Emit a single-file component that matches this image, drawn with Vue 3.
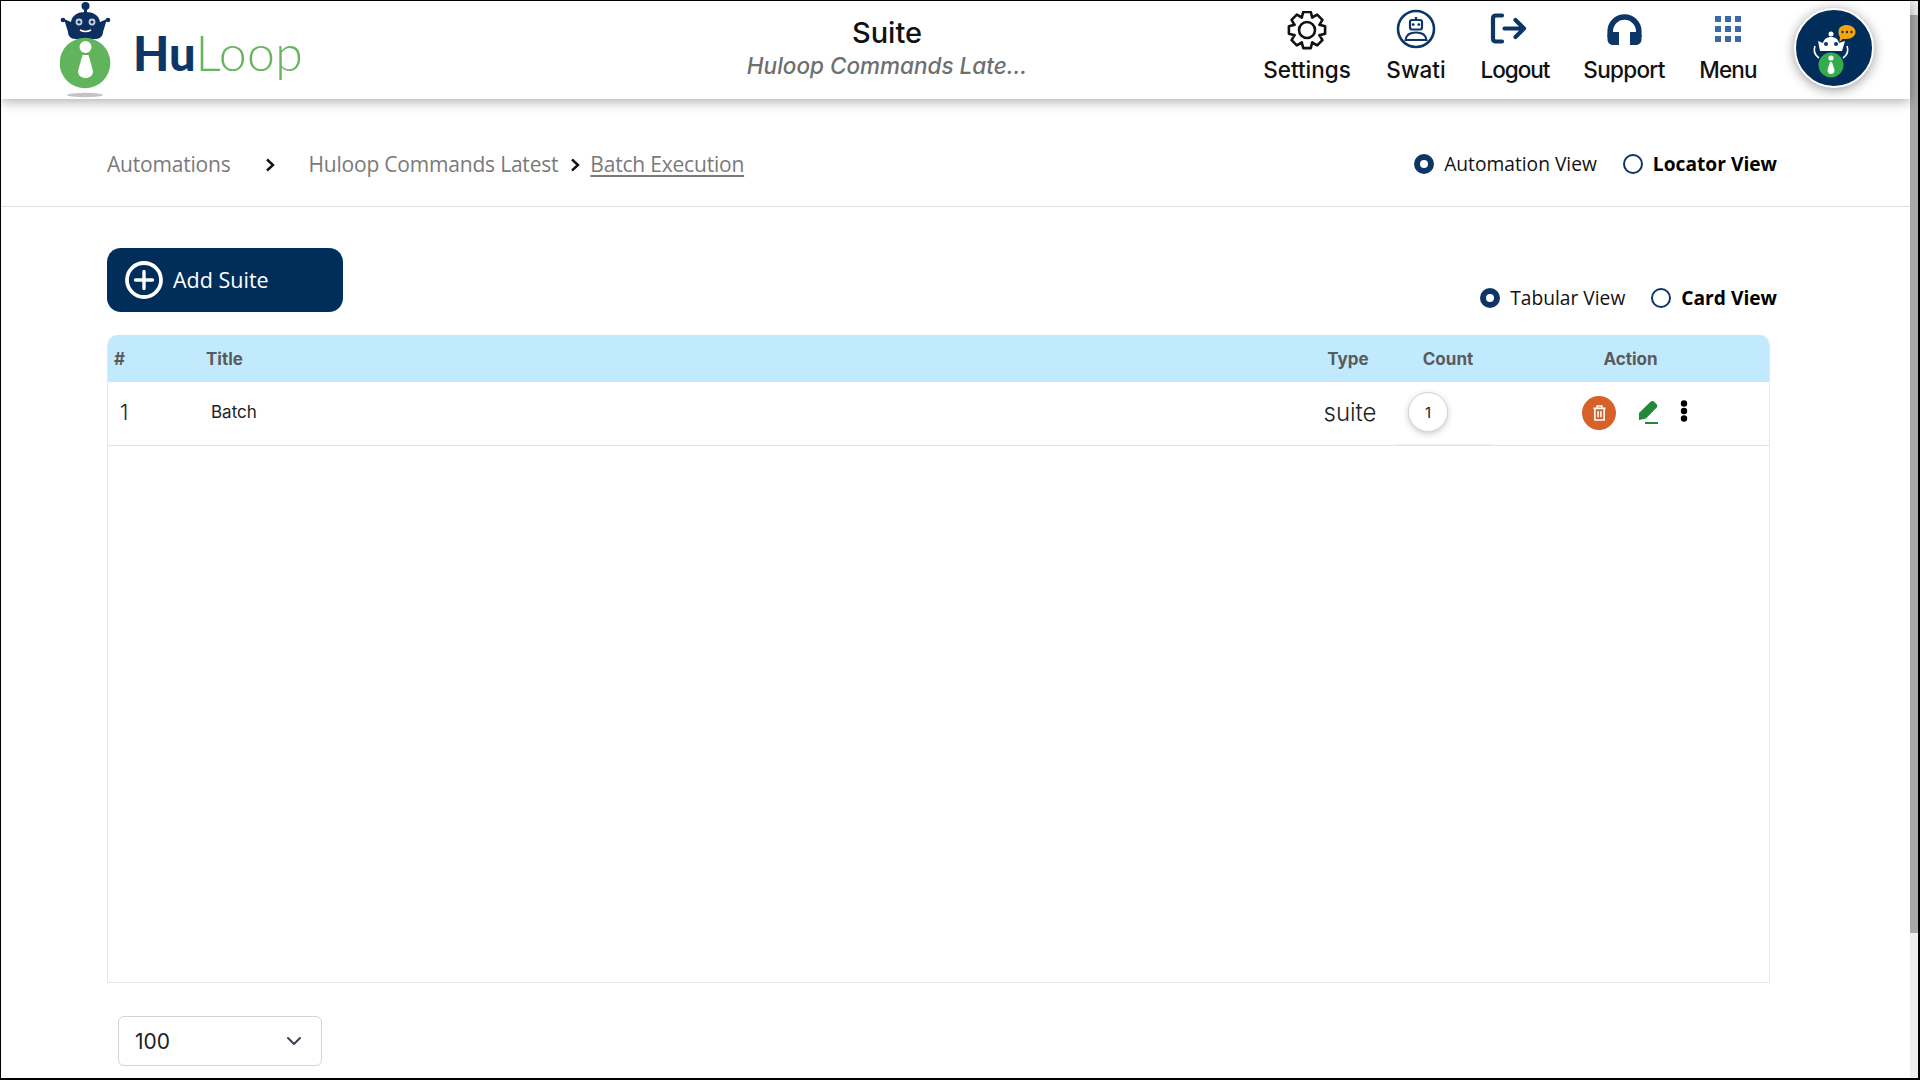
<template>
  <div class="screen">
    <div class="page">
      <header class="top-bar">
        <div class="brand">
          <svg class="brand-mark" viewBox="0 0 52 98" width="52" height="98">
            <ellipse cx="25" cy="94" rx="18" ry="2.2" fill="#c4c4c4" />
            <circle cx="25.5" cy="5" r="4" fill="#0d2f5f" />
            <rect x="24" y="7" width="3" height="6" fill="#0d2f5f" />
            <path d="M4 18 L11 21 C12 14 18 11 25.5 11 C33 11 39 14 40 21 L47 18 L43 31 C43 35 40 38 36 38 L15 38 C11 38 8 35 8 31 Z" fill="#0d2f5f" />
            <circle cx="3" cy="19" r="2.3" fill="#0d2f5f" />
            <circle cx="48" cy="19" r="2.3" fill="#0d2f5f" />
            <circle cx="19" cy="21" r="3.4" fill="#c9d2de" />
            <circle cx="32" cy="21" r="3.4" fill="#c9d2de" />
            <circle cx="19" cy="21" r="1.6" fill="#0d2f5f" />
            <circle cx="32" cy="21" r="1.6" fill="#0d2f5f" />
            <path d="M20 29 Q25.5 32 31 29" stroke="#fff" stroke-width="1.6" fill="none" />
            <circle cx="25" cy="62" r="25.3" fill="#62b45c" />
            <circle cx="25.5" cy="46" r="6" fill="#fff" />
            <path d="M22.5 54 L28.5 54 L33 70 C33 75 29 77 25.5 77 C22 77 18 75 18 70 Z" fill="#fff" />
          </svg>
          <div class="brand-name"><b>Hu</b><span>Loop</span></div>
        </div>

        <div class="page-title">
          <div class="page-title-main">Suite</div>
          <div class="page-title-sub">Huloop Commands Late...</div>
        </div>

        <nav class="top-nav">
          <div class="nav-item settings">
            <svg viewBox="0 0 40 40" width="40" height="40" fill="none" stroke="#111" stroke-width="2.6" stroke-linejoin="round">
              <path :d="gearPath" />
              <circle cx="20" cy="19" r="8" />
            </svg>
            <span>Settings</span>
          </div>
          <div class="nav-item swati">
            <svg viewBox="0 0 40 40" width="40" height="40" fill="none" stroke="#0d3666" stroke-width="2.6">
              <circle cx="20" cy="20" r="18" />
              <rect x="14" y="11" width="12" height="9.5" rx="2" stroke-width="2.2" fill="#fff" />
              <path d="M20 8 V11" stroke-width="2.4" />
              <circle cx="17.2" cy="15.6" r="1.4" fill="#0d3666" stroke="none" />
              <circle cx="22.8" cy="15.6" r="1.4" fill="#0d3666" stroke="none" />
              <path d="M9.5 31 C10 26 14 23.5 20 23.5 C26 23.5 30 26 30.5 31 Z" stroke-width="2" />
            </svg>
            <span>Swati</span>
          </div>
          <div class="nav-item logout">
            <svg viewBox="0 0 37 31" width="37" height="31" fill="none" stroke="#0d3666" stroke-width="4.2" stroke-linecap="round" stroke-linejoin="round">
              <path d="M12 2.5 H6 C3.8 2.5 3 3.5 3 5.5 V25.5 C3 27.5 3.8 28.5 6 28.5 H12" />
              <path d="M14.5 15.5 H34 M25.5 7 L34 15.5 L25.5 24" />
            </svg>
            <span>Logout</span>
          </div>
          <div class="nav-item support">
            <svg viewBox="0 0 35 31" width="35" height="31" fill="#0d3666">
              <path d="M3.2 23 V17.3 A14.3 14.3 0 0 1 31.8 17.3 V23" fill="none" stroke="#0d3666" stroke-width="5.6" />
              <path d="M.5 22 C.5 19.5 2.5 18 5 18 H12 V31 H6 C3 31 .5 28.5 .5 25.5 Z M34.5 22 C34.5 19.5 32.5 18 30 18 H23 V31 H29 C32 31 34.5 28.5 34.5 25.5 Z" />
            </svg>
            <span>Support</span>
          </div>
          <div class="nav-item menu">
            <svg viewBox="0 0 26 26" width="26" height="26" fill="#3a6aa3">
              <rect v-for="cell in menuCells" :key="cell.id" :x="cell.x" :y="cell.y" width="6" height="6" />
            </svg>
            <span>Menu</span>
          </div>
        </nav>

        <div class="avatar">
          <svg viewBox="0 0 76 76" width="76" height="76">
            <path d="M42.5 22 C42.5 17 46.5 15 50.5 15 C55.5 15 59.5 18 59.5 22 C59.5 26 55.5 29 50.5 29 L46.5 29 L43.5 32 L44 27 C43 26 42.5 24 42.5 22 Z" fill="#f2a516" />
            <circle cx="46.5" cy="22" r="1.2" fill="#3a2a05" />
            <circle cx="51" cy="22" r="1.2" fill="#3a2a05" />
            <circle cx="55.5" cy="22" r="1.2" fill="#3a2a05" />
            <circle cx="35" cy="24" r="2.5" fill="#fff" />
            <path d="M22 31 L27 33 C28 29 31 27 35 27 C39 27 42 29 43 33 L49 31 L46 41 L24 41 Z" fill="#fff" />
            <circle cx="30" cy="34" r="2" fill="#0d3666" />
            <circle cx="40" cy="34" r="2" fill="#0d3666" />
            <path d="M19 36 C17 41 19 45 23 48 M51 36 C53 41 51 45 47 48" stroke="#fff" stroke-width="1.6" fill="none" />
            <circle cx="35" cy="55" r="12.5" fill="#34ac4b" />
            <circle cx="35" cy="48" r="2.6" fill="#fff" />
            <path d="M34 52 H36 L38.5 60 C38.5 63 36.5 64 35 64 C33.5 64 31.5 63 31.5 60 Z" fill="#fff" />
          </svg>
        </div>
      </header>

      <div class="crumb-bar">
        <div class="crumbs">
          <span class="crumb first">Automations</span>
          <svg class="crumb-sep wide" viewBox="0 0 10 14" width="10" height="14"><path d="M2 1.5 L8 7 L2 12.5" /></svg>
          <span class="crumb">Huloop Commands Latest</span>
          <svg class="crumb-sep" viewBox="0 0 10 14" width="10" height="14"><path d="M2 1.5 L8 7 L2 12.5" /></svg>
          <span class="crumb current">Batch Execution</span>
        </div>
        <div class="radios">
          <label class="radio on"><i></i>Automation View</label>
          <label class="radio"><i></i><b>Locator View</b></label>
        </div>
      </div>

      <main class="content">
        <div class="toolbar">
          <button class="add-btn">
            <svg viewBox="0 0 38 38" width="38" height="38" fill="none" stroke="#fff">
              <circle cx="19" cy="19" r="17" stroke-width="3.8" />
              <path d="M19 10.5 V27.5 M10.5 19 H27.5" stroke-width="3.4" stroke-linecap="round" />
            </svg>
            <span>Add Suite</span>
          </button>
          <div class="radios">
            <label class="radio on"><i></i>Tabular View</label>
            <label class="radio"><i></i><b>Card View</b></label>
          </div>
        </div>

        <div class="table-wrap">
          <table>
            <thead>
              <tr>
                <th class="col-num">#</th>
                <th class="col-title">Title</th>
                <th class="col-type">Type</th>
                <th class="col-count">Count</th>
                <th class="col-action">Action</th>
              </tr>
            </thead>
            <tbody>
              <tr v-for="row in rows" :key="row.id">
                <td class="cell-num">{{ row.id }}</td>
                <td class="cell-title">{{ row.title }}</td>
                <td class="cell-type">{{ row.type }}</td>
                <td class="cell-count"><span class="count-badge">{{ row.count }}</span></td>
                <td class="cell-action">
                  <div class="actions">
                    <button class="trash-btn">
                      <svg viewBox="0 0 14 17" width="13" height="16" fill="none" stroke="#fff" stroke-width="1.7">
                        <path d="M.5 3.5 H13.5 M4.5 3.5 V1 H9.5 V3.5 M2 3.5 V16 H12 V3.5 M5.5 6.5 V13 M8.5 6.5 V13" />
                      </svg>
                    </button>
                    <svg class="pencil" viewBox="0 0 20 24" width="20" height="24">
                      <path d="M12.5 1.8 C13.5 .8 15 .8 16 1.6 L18.7 4.3 C19.5 5.2 19.5 6.6 18.7 7.4 L8 18.5 L1 20 L1 13 Z" fill="#22893a" />
                      <rect x="7" y="22" width="13" height="2" fill="#22893a" />
                    </svg>
                    <svg class="dots" viewBox="0 0 8 22" width="8" height="22" fill="#000">
                      <circle cx="4" cy="3.5" r="3.2" />
                      <circle cx="4" cy="11" r="3.2" />
                      <circle cx="4" cy="18.5" r="3.2" />
                    </svg>
                  </div>
                </td>
              </tr>
            </tbody>
          </table>
        </div>

        <div class="page-size">
          <span>100</span>
          <svg viewBox="0 0 16 10" width="16" height="10" fill="none" stroke="#3b4250" stroke-width="2" stroke-linecap="round" stroke-linejoin="round">
            <path d="M2 2 L8 8 L14 2" />
          </svg>
        </div>
      </main>
    </div>

    <div class="scrollbar"><div class="scroll-thumb"></div></div>
  </div>
</template>

<script setup>
const rows = [{ id: 1, title: 'Batch', type: 'suite', count: 1 }];

// 3x3 grid for the Menu icon
const menuCells = [];
for (let r = 0; r < 3; r++) {
  for (let c = 0; c < 3; c++) {
    menuCells.push({ id: `${r}-${c}`, x: c * 10, y: r * 10 });
  }
}

// 8 tooth outline for the Settings icon
const gearPath = (() => {
  const pts = [];
  for (let i = 0; i < 8; i++) {
    const a = (i * Math.PI) / 4 - Math.PI / 2;
    const step = [[-0.4, 13.5], [-0.2, 18.5], [0.2, 18.5], [0.4, 13.5]];
    for (const [da, radius] of step) {
      pts.push(`${(20 + radius * Math.cos(a + da)).toFixed(1)} ${(19 + radius * Math.sin(a + da)).toFixed(1)}`);
    }
  }
  return `M${pts.join(' L')} Z`;
})();
</script>

<style>
html, body {
  margin: 0;
  background: #fff;
}
</style>

<style scoped>
.screen {
  width: 1920px;
  height: 1080px;
  box-sizing: border-box;
  border: 1px solid #000;
  border-width: 1px 2px 2px 1px;
  display: flex;
  overflow: hidden;
  font-family: "Open Sans", sans-serif;
  background: #fff;
}

.page {
  width: 1909px;
  flex: none;
}

.scrollbar {
  flex: 1;
  padding-top: 14px;
  background: #efefef;
}

.scroll-thumb {
  height: 918px;
  background: #a8a8a8;
}

/* ===== HEADER ===== */
.top-bar {
  height: 98px;
  display: flex;
  align-items: center;
  background: #fff;
  box-shadow: 0 2px 12px rgba(0, 0, 0, 0.35);
  position: relative;
}

.brand {
  width: 500px;
  padding-left: 59px;
  box-sizing: border-box;
  display: flex;
  align-items: center;
  gap: 21px;
  flex: none;
}

.brand-mark {
  flex: none;
}

.brand-name {
  font-family: Lato, sans-serif;
  font-size: 50px;
  line-height: 1;
  margin-top: 4px;
  color: #68b560;
  font-weight: 300;
  letter-spacing: 0.4px;
}

.brand-name b {
  color: #0d3666;
  font-size: 47px;
  font-weight: 900;
  letter-spacing: 0;
}

.page-title {
  width: 772px;
  flex: none;
  text-align: center;
  font-family: Inter, sans-serif;
  margin-top: -5px;
}

.page-title-main {
  font-size: 29px;
  font-weight: 500;
  color: #111;
  line-height: 36px;
}

.page-title-sub {
  font-size: 22.5px;
  font-style: italic;
  font-weight: 500;
  color: #6f6f6f;
  line-height: 30px;
}

.top-nav {
  display: flex;
  margin-left: -21px;
  margin-top: -6px;
}

.nav-item {
  display: flex;
  flex-direction: column;
  align-items: center;
  justify-content: space-between;
  height: 72px;
  font-family: Inter, sans-serif;
  font-size: 22.5px;
  font-weight: 500;
  color: #111;
}

.nav-item svg {
  flex: none;
}

.settings { width: 110px; }
.swati { width: 108px; }
.logout { width: 90px; letter-spacing: -1px; }
.support { width: 128px; letter-spacing: -0.7px; }
.menu { width: 80px; letter-spacing: -0.8px; }

.nav-item.swati svg { margin-top: -2.5px; }
.nav-item.logout svg { margin-top: 2px; margin-right: 14px; }
.nav-item.support svg { margin-top: 3px; }
.nav-item.menu svg { margin-top: 5px; }

.avatar {
  width: 80px;
  height: 80px;
  box-sizing: border-box;
  border-radius: 50%;
  background: #012d5a;
  border: 2px solid #fff;
  box-shadow: 0 2px 12px rgba(0, 0, 0, 0.4);
  margin-left: 26px;
  margin-top: -4px;
  flex: none;
}

/* ===== BREADCRUMB ===== */
.crumb-bar {
  height: 108px;
  box-sizing: border-box;
  padding: 22px 133px 0 106px;
  display: flex;
  align-items: center;
  justify-content: space-between;
  border-bottom: 1px solid #dedede;
}

.crumbs {
  display: flex;
  align-items: center;
  font-size: 21px;
  letter-spacing: -0.2px;
  color: #7a7a7a;
}

.crumb-sep {
  flex: none;
  fill: none;
  stroke: #111;
  stroke-width: 2.4;
  margin: 3px 10px 0 12px;
}

.crumb-sep.wide {
  margin: 3px 34px 0 34px;
}

.crumb.current {
  text-decoration: underline;
  text-underline-offset: 3px;
}

.radios {
  display: flex;
  gap: 26px;
}

.radio {
  display: flex;
  align-items: center;
  gap: 10px;
  font-size: 19.2px;
  color: #111;
}

.radio b {
  color: #000;
  font-weight: 700;
}

.radio i {
  width: 20px;
  height: 20px;
  box-sizing: border-box;
  border-radius: 50%;
  border: 2px solid #0d3666;
  flex: none;
}

.radio.on i {
  border: 6.5px solid #0d3666;
}

/* ===== CONTENT ===== */
.content {
  padding: 41px 133px 0 106px;
}

.toolbar {
  display: flex;
  justify-content: space-between;
  align-items: flex-end;
  margin-bottom: 23px;
}

.toolbar .radios {
  padding-bottom: 1px;
}

.add-btn {
  width: 236px;
  height: 64px;
  border: none;
  border-radius: 14px;
  background: #012d5a;
  color: #fff;
  font-family: "Open Sans", sans-serif;
  font-size: 21.5px;
  display: flex;
  align-items: center;
  gap: 10px;
  padding: 0 0 0 18px;
  cursor: pointer;
}

.add-btn span {
  margin-top: -2px;
}

.table-wrap {
  width: 1663px;
  height: 648px;
  box-sizing: border-box;
  border: 1px solid #e5e7eb;
  border-top: none;
  border-radius: 10px 10px 0 0;
  overflow: hidden;
}

table {
  width: 100%;
  border-collapse: collapse;
  table-layout: fixed;
}

thead {
  background: #c2eafe;
}

th {
  height: 47px;
  padding: 0;
  box-sizing: border-box;
  font-family: Inter, sans-serif;
  font-size: 17px;
  font-weight: 700;
  color: #5a5a5a;
  text-align: left;
}

td {
  height: 63px;
  padding: 0 0 2px;
  box-sizing: border-box;
  border-bottom: 1px solid #e3e3e3;
  font-family: Inter, sans-serif;
  color: #222;
}

.col-num { width: 93px; padding-left: 6px; }
.col-title { padding-left: 5px; }
.col-type { width: 96px; text-align: center; }
.col-count { width: 96px; text-align: center; padding-left: 8px; }
.col-action { width: 277px; text-align: center; }

.cell-num {
  padding-left: 12px;
  font-size: 21px;
  font-weight: 300;
}

.cell-title {
  padding-left: 10px;
  font-size: 17px;
}

.cell-type {
  text-align: center;
  padding-left: 4px;
  font-size: 24px;
  font-weight: 300;
}

.cell-count {
  padding-left: 12px;
  box-shadow: inset 0 -1px 0 #eeeeee;
}

.count-badge {
  width: 40px;
  height: 40px;
  box-sizing: border-box;
  border-radius: 50%;
  background: #fff;
  border: 1px solid #d5d5d5;
  box-shadow: 0 2px 6px rgba(0, 0, 0, 0.2);
  display: flex;
  align-items: center;
  justify-content: center;
  font-size: 15px;
}

.actions {
  display: flex;
  align-items: center;
  padding-left: 90px;
}

.trash-btn {
  width: 34px;
  height: 34px;
  border: none;
  border-radius: 50%;
  background: #d6622a;
  display: flex;
  align-items: center;
  justify-content: center;
  padding: 0;
  margin-top: 2px;
}

.pencil {
  margin-left: 22px;
}

.dots {
  margin-left: 22px;
  margin-top: -2px;
}

.page-size {
  width: 204px;
  height: 50px;
  box-sizing: border-box;
  margin: 33px 0 0 11px;
  padding: 0 19px 0 16px;
  border: 1px solid #d1d5db;
  border-radius: 6px;
  display: flex;
  align-items: center;
  justify-content: space-between;
  font-family: Inter, sans-serif;
  font-size: 21px;
  color: #222;
}
</style>
